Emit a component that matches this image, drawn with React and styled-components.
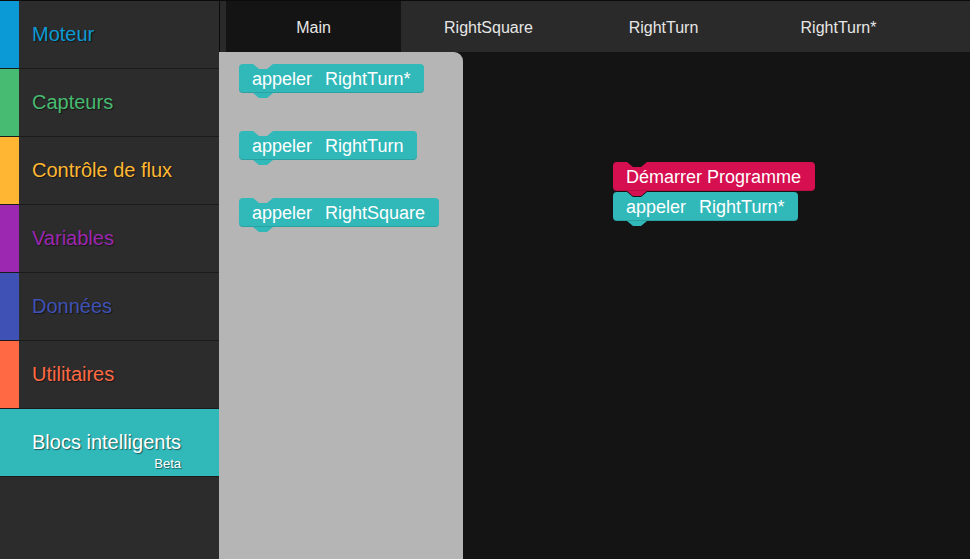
import React from "react";
import styled, { createGlobalStyle } from "styled-components";

const TEAL = "#31b8b9";
const RED = "#d50f50";
const WORKSPACE = "#141414";
const FLYOUT = "#b5b5b5";

const Global = createGlobalStyle`
  html, body {
    margin: 0;
    padding: 0;
    background: ${WORKSPACE};
    font-family: "Liberation Sans", Arial, sans-serif;
  }
`;

const Page = styled.div`
  display: flex;
  height: 559px;
  border-top: 1px solid #0b0b0b;
  box-sizing: border-box;
  overflow: hidden;
`;

const Sidebar = styled.div`
  width: 219px;
  flex-shrink: 0;
  background: #2c2c2c;
  display: flex;
  flex-direction: column;
`;

const Category = styled.div`
  position: relative;
  height: 67px;
  flex-shrink: 0;
  display: flex;
  border-bottom: 1px solid #1b1b1b;
  background: ${(p) => (p.$selected ? TEAL : "transparent")};
`;

const Stripe = styled.div`
  width: 19px;
  background: ${(p) => p.$color};
`;

const CatLabel = styled.div`
  display: flex;
  align-items: center;
  padding-left: 13px;
  font-size: 20px;
  color: ${(p) => p.$color};
  text-shadow: 1px 1px 1px rgba(0, 0, 0, 0.5);
`;

const Beta = styled.span`
  position: absolute;
  right: 38px;
  bottom: 5px;
  font-size: 13px;
  color: #fff;
  text-shadow: 1px 1px 1px rgba(0, 0, 0, 0.5);
`;

const Main = styled.div`
  flex: 1;
  display: flex;
  flex-direction: column;
  min-width: 0;
`;

const TabBar = styled.div`
  height: 51px;
  flex-shrink: 0;
  display: flex;
  background: #2a2a2a;
  border-left: 1px solid #0b0b0b;
  padding-left: 6px;
`;

const Tab = styled.div`
  width: 175px;
  display: flex;
  align-items: center;
  justify-content: center;
  padding-top: 2px;
  font-size: 16px;
  color: #e6e6e6;
  background: ${(p) => (p.$active ? WORKSPACE : "transparent")};
`;

const Canvas = styled.div`
  flex: 1;
  position: relative;
  display: flex;
  background: ${WORKSPACE};
`;

const Flyout = styled.div`
  width: 244px;
  background: ${FLYOUT};
  border-top-right-radius: 9px;
  padding: 12px 0 0 20px;
  box-sizing: border-box;
  display: flex;
  flex-direction: column;
  align-items: flex-start;
  gap: 38px;
`;

const Stack = styled.div`
  position: absolute;
  left: 394px;
  top: 110px;
  display: flex;
  flex-direction: column;
  align-items: flex-start;
  gap: 1px;
`;

const BlockBody = styled.div`
  position: relative;
  z-index: ${(p) => p.$z || 1};
  height: 29px;
  box-sizing: border-box;
  display: inline-flex;
  align-items: center;
  gap: 13px;
  padding: 2px 14px 0 13px;
  border-radius: 4px;
  background: ${(p) => p.$color};
  box-shadow: inset 0 -1px 0 rgba(0, 0, 0, 0.12);
  color: #fff;
  font-size: 18px;
  white-space: nowrap;
`;

const Notch = styled.svg`
  position: absolute;
  left: 14px;
  top: 0;
`;

const Tail = styled.svg`
  position: absolute;
  left: 14px;
  top: 100%;
`;

const NOTCH_PATH = "M0 0 L6 5 L14 5 L20 0 Z";

function Block({ color, bg, labels, z }) {
  return (
    <BlockBody $color={color} $z={z}>
      <Notch width="20" height="5" viewBox="0 0 20 5">
        <path d={NOTCH_PATH} fill={bg} />
      </Notch>
      {labels.map((l) => (
        <span key={l}>{l}</span>
      ))}
      <Tail width="20" height="5" viewBox="0 0 20 5">
        <path d={NOTCH_PATH} fill={color} />
      </Tail>
    </BlockBody>
  );
}

const categories = [
  { name: "Moteur", color: "#0b9ad5" },
  { name: "Capteurs", color: "#47bb71" },
  { name: "Contrôle de flux", color: "#ffb733" },
  { name: "Variables", color: "#9c27b0" },
  { name: "Données", color: "#3f51b5" },
  { name: "Utilitaires", color: "#ff6a44" },
];

const tabs = ["Main", "RightSquare", "RightTurn", "RightTurn*"];
const flyoutBlocks = ["RightTurn*", "RightTurn", "RightSquare"];

export default function App() {
  return (
    <>
      <Global />
      <Page>
        <Sidebar>
          {categories.map((c) => (
            <Category key={c.name}>
              <Stripe $color={c.color} />
              <CatLabel $color={c.color}>{c.name}</CatLabel>
            </Category>
          ))}
          <Category $selected>
            <Stripe $color={TEAL} />
            <CatLabel $color="#fff">Blocs intelligents</CatLabel>
            <Beta>Beta</Beta>
          </Category>
        </Sidebar>
        <Main>
          <TabBar>
            {tabs.map((t, i) => (
              <Tab key={t} $active={i === 0}>
                {t}
              </Tab>
            ))}
          </TabBar>
          <Canvas>
            <Flyout>
              {flyoutBlocks.map((b) => (
                <Block key={b} color={TEAL} bg={FLYOUT} labels={["appeler", b]} />
              ))}
            </Flyout>
            <Stack>
              <Block color={RED} bg={WORKSPACE} labels={["Démarrer Programme"]} z={2} />
              <Block color={TEAL} bg={WORKSPACE} labels={["appeler", "RightTurn*"]} />
            </Stack>
          </Canvas>
        </Main>
      </Page>
    </>
  );
}
